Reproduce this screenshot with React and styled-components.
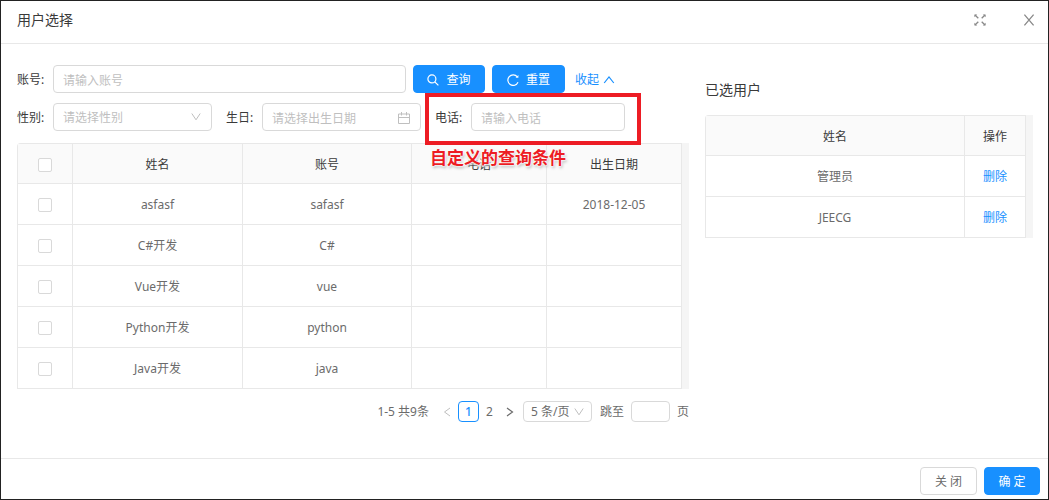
import React from 'react';
import styled, { createGlobalStyle, css } from 'styled-components';

const GlobalStyle = createGlobalStyle`
  *, *::before, *::after { box-sizing: border-box; }
  body {
    margin: 0;
    background: #fff;
    color: #6b6b6b;
    font: 12px/20px "Noto Sans", "Noto Sans CJK SC", sans-serif;
  }
  button, input, select { font: inherit; color: inherit; }
  a { color: #1890ff; text-decoration: none; }
`;

const Modal = styled.section`
  border: 1px solid #222;
  min-height: 100vh;
  display: flex;
  flex-direction: column;
`;

const Header = styled.header`
  display: flex;
  align-items: center;
  justify-content: space-between;
  padding: 8px 11px 12px 16px;
  border-bottom: 1px solid #e8e8e8;
`;

const Title = styled.h1`
  margin: 0;
  font-size: 14px;
  line-height: 22px;
  font-weight: 400;
  color: #3a3a3a;
`;

const HeaderActions = styled.div`
  display: flex;
  gap: 33px;
`;

const IconButton = styled.button`
  display: flex;
  align-items: center;
  justify-content: center;
  width: 16px;
  height: 22px;
  padding: 0;
  border: 0;
  background: none;
  color: #888;
`;

const Body = styled.main`
  flex: 1;
  display: grid;
  grid-template-columns: 672fr 328fr;
  gap: 16px;
  align-items: start;
  padding: 21px 15px 36px 16px;
`;

const Form = styled.form`
  display: flex;
  flex-direction: column;
  gap: 10px;
  margin-bottom: 12px;
`;

const FormRow = styled.div`
  display: flex;
  align-items: center;
  gap: ${(p) => p.$gap}px;
`;

const Field = styled.div`
  position: relative;
  display: flex;
  align-items: center;
  width: ${(p) => p.$width}px;
`;

const Label = styled.label`
  flex: none;
  width: 36px;
  padding-top: 2px;
  color: #3a3a3a;
`;

const ControlBox = styled.div`
  position: relative;
  flex: 1;
  min-width: 0;
  svg {
    position: absolute;
    right: 11px;
    top: 9px;
    color: #bfbfbf;
    pointer-events: none;
  }
`;

const control = css`
  display: block;
  width: 100%;
  height: 28px;
  padding: 2px 10px 0 9px;
  border: 1px solid #d9d9d9;
  border-radius: 4px;
  background: #fff;
  outline: none;
`;

const TextInput = styled.input`
  ${control}
  &::placeholder { color: #bfbfbf; opacity: 1; }
`;

const SelectInput = styled.select`
  ${control}
  appearance: none;
  color: #bfbfbf;
`;

const Button = styled.button`
  display: flex;
  align-items: center;
  justify-content: center;
  gap: 7px;
  width: ${(p) => p.$width}px;
  height: 28px;
  padding: 1px 0 0;
  border: 1px solid ${(p) => (p.$primary ? '#1890ff' : '#d9d9d9')};
  border-radius: 4px;
  background: ${(p) => (p.$primary ? '#1890ff' : '#fff')};
  color: ${(p) => (p.$primary ? '#fff' : '#6b6b6b')};
`;

const Collapse = styled.a`
  display: flex;
  align-items: center;
  gap: 4px;
  margin-left: 3px;
  padding-top: 2px;
`;

const Highlight = styled.div`
  position: absolute;
  z-index: 1;
  top: -10px;
  left: -10px;
  width: 216px;
  height: 52px;
  border: 4px solid #ed1c24;
  pointer-events: none;
`;

const Note = styled.strong`
  position: absolute;
  z-index: 1;
  top: 43px;
  left: -5px;
  font-size: 17px;
  line-height: 24px;
  font-weight: 700;
  white-space: nowrap;
  color: #ed1c24;
  text-shadow: 0 0 1px #fff, 0 0 2px #fff, 0 0 2px #fff, 0 0 3px #fff, 1px 2px 3px #aaa;
`;

const TableFrame = styled.div`
  padding-right: 7px;
  background: #f5f5f5;
  border-radius: 4px 0 0 0;
`;

const Table = styled.table`
  width: 100%;
  table-layout: fixed;
  border-collapse: separate;
  border-spacing: 0;
  border-top: 1px solid #e8e8e8;
  border-left: 1px solid #e8e8e8;
  border-radius: 4px 0 0 0;
  background: #fff;
  th, td {
    height: 41px;
    padding: 2px 0 0;
    text-align: center;
    border-right: 1px solid #e8e8e8;
    border-bottom: 1px solid #e8e8e8;
  }
  th {
    height: 40px;
    background: #fafafa;
    font-weight: 400;
    color: #3a3a3a;
  }
`;

const Column = styled.col`
  width: ${(p) => p.$width};
`;

const Checkbox = styled.input`
  display: block;
  appearance: none;
  width: 14px;
  height: 14px;
  margin: 0 auto;
  border: 1px solid #d9d9d9;
  border-radius: 2px;
  background: #fff;
`;

const Pagination = styled.nav`
  display: flex;
  justify-content: flex-end;
  align-items: center;
  gap: 8px;
  margin-top: 12px;
`;

const Pager = styled.div`
  display: flex;
  align-items: center;
`;

const PageButton = styled.button`
  display: flex;
  align-items: center;
  justify-content: center;
  width: 21px;
  height: 21px;
  padding: 0;
  border: 1px solid ${(p) => (p.$active ? '#1890ff' : 'transparent')};
  border-radius: 4px;
  background: none;
  color: ${(p) => (p.$active ? '#1890ff' : '#6b6b6b')};
  font-weight: ${(p) => (p.$active ? 500 : 400)};
  &:disabled { color: #bfbfbf; }
`;

const SizePicker = styled.div`
  position: relative;
  width: 69px;
  margin-left: 2px;
  select { height: 21px; padding: 0 7px; color: #6b6b6b; }
  svg {
    position: absolute;
    right: 8px;
    top: 6px;
    color: #bfbfbf;
    pointer-events: none;
  }
`;

const JumpInput = styled.input`
  ${control}
  width: 39px;
  height: 21px;
  padding: 0 4px;
`;

const JumpLabel = styled.label`
  display: flex;
  align-items: center;
  gap: 7px;
`;

const SideTitle = styled.h2`
  margin: 14px 0;
  font-size: 14px;
  line-height: 22px;
  font-weight: 400;
  color: #3a3a3a;
`;

const Footer = styled.footer`
  display: flex;
  justify-content: flex-end;
  gap: 7px;
  padding: 8px 8px 4px;
  border-top: 1px solid #e8e8e8;
`;

const Icon = ({ w = 12, h = 12, stroke = 1, children }) => (
  <svg width={w} height={h} viewBox={`0 0 ${w} ${h}`} fill="none" stroke="currentColor" strokeWidth={stroke} aria-hidden="true">
    {children}
  </svg>
);

const Chevron = () => <Icon w={10} h={10}><path d="M.8 1.5 5 7.8 9.2 1.5" /></Icon>;

const users = [
  ['asfasf', 'safasf', '', '2018-12-05'],
  ['C#开发', 'C#', '', ''],
  ['Vue开发', 'vue', '', ''],
  ['Python开发', 'python', '', ''],
  ['Java开发', 'java', '', ''],
];

export default function App() {
  return (
    <>
      <GlobalStyle />
      <Modal>
        <Header>
          <Title>用户选择</Title>
          <HeaderActions>
            <IconButton aria-label="全屏">
              <Icon stroke={1.3}>
                <path d="M1 1l3.300 3.300M11 1 7.700 4.300M1 11l3.300-3.300M11 11 7.700 7.700" />
                <path d="M.4.4h2.800L.4 3.200zM11.600.4v2.800L8.800.4zM.4 11.600V8.800l2.800 2.800zM11.600 11.600H8.800l2.800-2.800z" fill="currentColor" stroke="none" />
              </Icon>
            </IconButton>
            <IconButton aria-label="关闭">
              <Icon stroke={1.3}><path d="M1.400.6l9.200 10.800M10.600.6 1.400 11.400" /></Icon>
            </IconButton>
          </HeaderActions>
        </Header>
        <Body>
          <div>
            <Form onSubmit={(e) => e.preventDefault()}>
              <FormRow $gap={7}>
                <Field $width={389}>
                  <Label htmlFor="account">账号:</Label>
                  <ControlBox><TextInput id="account" placeholder="请输入账号" /></ControlBox>
                </Field>
                <Button $primary $width={72} type="submit">
                  <Icon stroke={1.2}><circle cx="4.9" cy="4.9" r="4" /><path d="m7.8 7.8 3.6 3.6" /></Icon>
                  查询
                </Button>
                <Button $primary $width={73} type="reset">
                  <Icon stroke={1.2}><path d="M11 8.300A5.300 5.300 0 1 1 10.300 2.800" /><path d="M11.400 1v2.800H8.600z" fill="currentColor" stroke="none" /></Icon>
                  重置
                </Button>
                <Collapse href="#">
                  收起
                  <Icon w={12} h={10} stroke={1.2}><path d="M1.200 8 6 2l4.800 6" /></Icon>
                </Collapse>
              </FormRow>
              <FormRow $gap={14}>
                <Field $width={195}>
                  <Label htmlFor="gender">性别:</Label>
                  <ControlBox>
                    <SelectInput id="gender"><option>请选择性别</option></SelectInput>
                    <Chevron />
                  </ControlBox>
                </Field>
                <Field $width={195}>
                  <Label htmlFor="birthday">生日:</Label>
                  <ControlBox>
                    <TextInput id="birthday" placeholder="请选择出生日期" />
                    <Icon><path d="M.5 2h11v9.500H.5zM.5 5.500h11M3.500 0v3.500M8.500 0v3.500" /></Icon>
                  </ControlBox>
                </Field>
                <Field $width={190}>
                  <Label htmlFor="phone">电话:</Label>
                  <ControlBox><TextInput id="phone" placeholder="请输入电话" /></ControlBox>
                  <Highlight />
                  <Note>自定义的查询条件</Note>
                </Field>
              </FormRow>
            </Form>
            <TableFrame>
              <Table>
                <colgroup>
                  <Column $width="55px" />
                  <Column $width="170px" />
                  <Column $width="169px" />
                  <Column />
                  <Column />
                </colgroup>
                <thead>
                  <tr>
                    <th><Checkbox type="checkbox" aria-label="全选" /></th>
                    <th>姓名</th><th>账号</th><th>电话</th><th>出生日期</th>
                  </tr>
                </thead>
                <tbody>
                  {users.map((row) => (
                    <tr key={row[0]}>
                      <td><Checkbox type="checkbox" aria-label={row[0]} /></td>
                      {row.map((cell, i) => <td key={i}>{cell}</td>)}
                    </tr>
                  ))}
                </tbody>
              </Table>
            </TableFrame>
            <Pagination>
              <span>1-5 共9条</span>
              <Pager>
                <PageButton disabled aria-label="上一页"><Icon w={8} h={10}><path d="M7 1 1.500 5 7 9" /></Icon></PageButton>
                <PageButton $active>1</PageButton>
                <PageButton>2</PageButton>
                <PageButton aria-label="下一页"><Icon w={8} h={10} stroke={1.2}><path d="M1 1l5.500 4L1 9" /></Icon></PageButton>
                <SizePicker>
                  <SelectInput aria-label="每页条数"><option>5 条/页</option></SelectInput>
                  <Chevron />
                </SizePicker>
              </Pager>
              <JumpLabel>跳至<JumpInput />页</JumpLabel>
            </Pagination>
          </div>
          <aside>
            <SideTitle>已选用户</SideTitle>
            <TableFrame>
              <Table>
                <colgroup><Column /><Column $width="61px" /></colgroup>
                <thead><tr><th>姓名</th><th>操作</th></tr></thead>
                <tbody>
                  {['管理员', 'JEECG'].map((name) => (
                    <tr key={name}><td>{name}</td><td><a href="#">删除</a></td></tr>
                  ))}
                </tbody>
              </Table>
            </TableFrame>
          </aside>
        </Body>
        <Footer>
          <Button $width={57}>关 闭</Button>
          <Button $primary $width={56}>确 定</Button>
        </Footer>
      </Modal>
    </>
  );
}
